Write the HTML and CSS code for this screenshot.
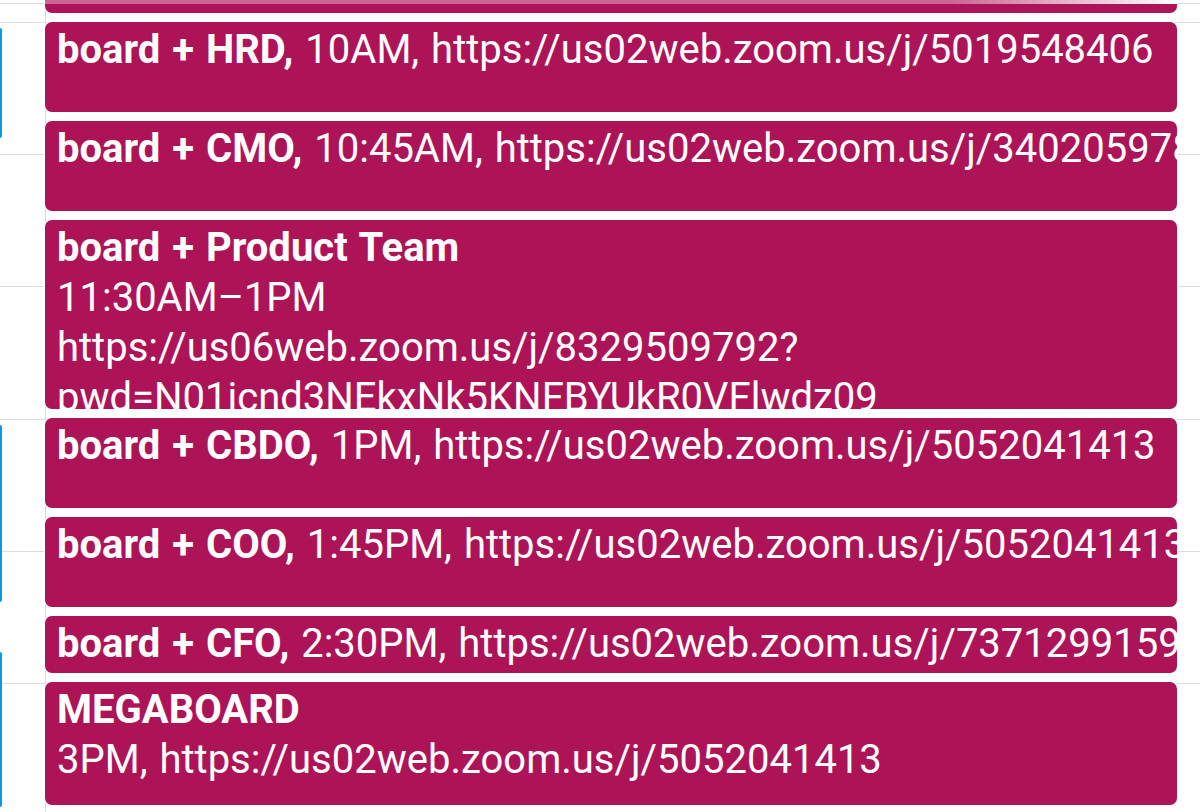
FILE: index.html
```html
<!DOCTYPE html>
<html>
<head>
<meta charset="utf-8">
<link rel="stylesheet" href="styles.css">
</head>
<body>
<div class="grid">
  <div class="prev-col">
    <div class="prev-event" style="margin-top:28px;height:110px"></div>
    <div class="prev-event" style="margin-top:287px;height:177px"></div>
    <div class="prev-event" style="margin-top:50px;height:155px"></div>
  </div>
  <div class="day-col">
    <div class="event event-cut"><div class="fade"></div></div>
    <div class="event" style="height:90px">
      <div class="line"><span class="title">board + HRD,</span> 10AM, https://us02web.zoom.us/j/5019548406</div>
    </div>
    <div class="event" style="height:90px">
      <div class="line"><span class="title">board + CMO,</span> 10:45AM, https://us02web.zoom.us/j/3402059786</div>
    </div>
    <div class="event" style="height:189px">
      <div class="title">board + Product Team</div>
      <div>11:30AM–1PM</div>
      <div class="wrap">https://us06web.zoom.us/j/8329509792?<wbr>pwd=N01icnd3NEkxNk5KNFBYUkR0VFlwdz09</div>
    </div>
    <div class="event" style="height:90px">
      <div class="line"><span class="title">board + CBDO,</span> 1PM, https://us02web.zoom.us/j/5052041413</div>
    </div>
    <div class="event" style="height:90px">
      <div class="line"><span class="title">board + COO,</span> 1:45PM, https://us02web.zoom.us/j/5052041413</div>
    </div>
    <div class="event" style="height:57px">
      <div class="line"><span class="title">board + CFO,</span> 2:30PM, https://us02web.zoom.us/j/7371299159</div>
    </div>
    <div class="event" style="height:123px">
      <div class="title">MEGABOARD</div>
      <div>3PM, https://us02web.zoom.us/j/5052041413</div>
    </div>
  </div>
  <div class="next-col"></div>
</div>
</body>
</html>
```
FILE: styles.css
```css
html, body {
  margin: 0;
  padding: 0;
  background: #fff;
  overflow: hidden;
}
body {
  width: 1200px;
  height: 812px;
  font-family: Roboto, "Liberation Sans", Arial, sans-serif;
}
.grid {
  display: flex;
  height: 812px;
  background-image: repeating-linear-gradient(to bottom, #dadce0 0, #dadce0 1px, transparent 1px, transparent 132.25px);
  background-position: 0 22px;
  background-repeat: repeat-y;
}
.prev-col {
  width: 45px;
  flex: none;
  border-right: 1px solid #dadce0;
  display: flex;
  flex-direction: column;
}
.prev-event {
  width: 2px;
  background: #039be5;
  border-radius: 0 2px 2px 0;
  flex: none;
}
.day-col {
  width: 1132px;
  flex: none;
  margin-left: -1px;
  display: flex;
  flex-direction: column;
}
.next-col {
  flex: 1;
}
.event {
  flex: none;
  box-sizing: border-box;
  background: #ad1457;
  color: #fff;
  border-radius: 7px;
  box-shadow: 0 0 0 1px #fff;
  margin-bottom: 9px;
  padding: 3px 0 0 12px;
  overflow: hidden;
  font-size: 40px;
  line-height: 50px;
  word-spacing: 2px;
}
.event-cut {
  height: 13px;
  border-radius: 0 0 7px 7px;
  position: relative;
  padding: 0;
}
.fade {
  position: absolute;
  left: 0;
  right: 0;
  top: 0;
  height: 4px;
  background: linear-gradient(to right, rgba(255,255,255,0.35) 0%, rgba(255,255,255,0.35) 80%, #fff 100%);
}
.line {
  white-space: nowrap;
}
.title {
  font-weight: 700;
}
.wrap {
  white-space: normal;
}
```
